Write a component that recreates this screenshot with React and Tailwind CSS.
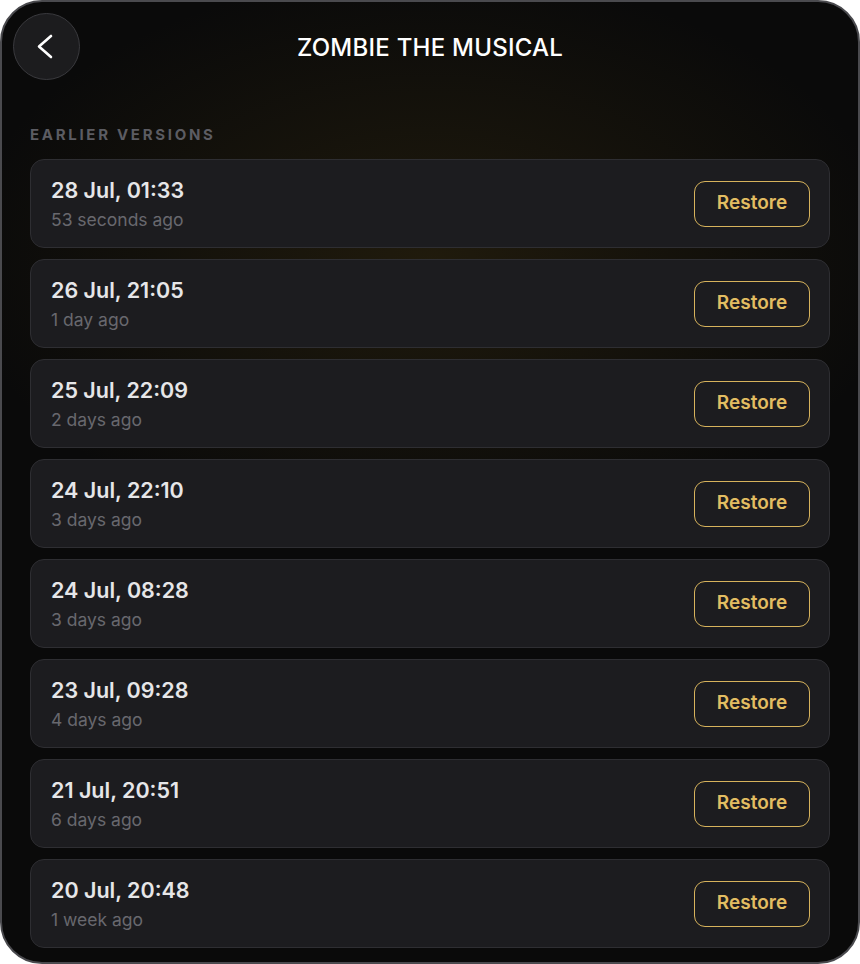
const versions = [
  { date: '28 Jul, 01:33', ago: '53 seconds ago' },
  { date: '26 Jul, 21:05', ago: '1 day ago' },
  { date: '25 Jul, 22:09', ago: '2 days ago' },
  { date: '24 Jul, 22:10', ago: '3 days ago' },
  { date: '24 Jul, 08:28', ago: '3 days ago' },
  { date: '23 Jul, 09:28', ago: '4 days ago' },
  { date: '21 Jul, 20:51', ago: '6 days ago' },
  { date: '20 Jul, 20:48', ago: '1 week ago' },
]

function BackIcon() {
  return (
    <svg width="18" height="25" viewBox="0 0 18 25" fill="none" className="-ml-[3px]">
      <path d="M15 2 L3 12.5 L15 23" stroke="currentColor" strokeWidth="2.6" strokeLinecap="round" strokeLinejoin="round" />
    </svg>
  )
}

function VersionRow({ date, ago }) {
  return (
    <div className="flex h-[89px] items-center justify-between rounded-[14px] border border-[#2e2e32] bg-[#1c1c1f] pl-[20px] pr-[19px]">
      <div className="flex flex-col gap-[6px]">
        <span className="text-[21.5px] font-semibold leading-[26px] text-[#e6e6e8]">{date}</span>
        <span className="text-[17.5px] leading-[22px] text-[#68686e]">{ago}</span>
      </div>
      <button className="flex h-[46px] w-[116px] items-center justify-center rounded-[11px] border-[1.5px] border-[#d7b35c] text-[19px] font-semibold text-[#e2bd62]">
        Restore
      </button>
    </div>
  )
}

export default function App() {
  return (
    <div className="h-[964px] w-[860px] bg-white font-['Inter','Liberation_Sans',sans-serif]">
      <div className="flex h-full flex-col overflow-hidden rounded-[42px] border-2 border-[#4a4a4e] bg-[#0a0a0a] bg-[radial-gradient(ellipse_55%_30%_at_50%_27%,rgba(110,85,20,0.22),transparent_100%)]">
        {/* Header */}
        <div className="flex items-center justify-between pl-[11px] pr-[11px] pt-[11px]">
          <button className="flex h-[67px] w-[67px] items-center justify-center rounded-full border border-[#3a3a3e] bg-[#1c1c1e] text-white">
            <BackIcon />
          </button>
          <h1 className="pt-[2px] text-[24px] font-medium tracking-[0.01em] text-white">ZOMBIE THE MUSICAL</h1>
          <div className="w-[67px]" />
        </div>

        {/* List */}
        <div className="px-[28px] pt-[45px]">
          <h2 className="text-[15px] font-bold leading-[20px] tracking-[0.18em] text-[#5c5c62]">EARLIER VERSIONS</h2>
          <div className="mt-[14px] flex flex-col gap-[11px]">
            {versions.map((v) => (
              <VersionRow key={v.date + v.ago} date={v.date} ago={v.ago} />
            ))}
          </div>
        </div>
      </div>
    </div>
  )
}
